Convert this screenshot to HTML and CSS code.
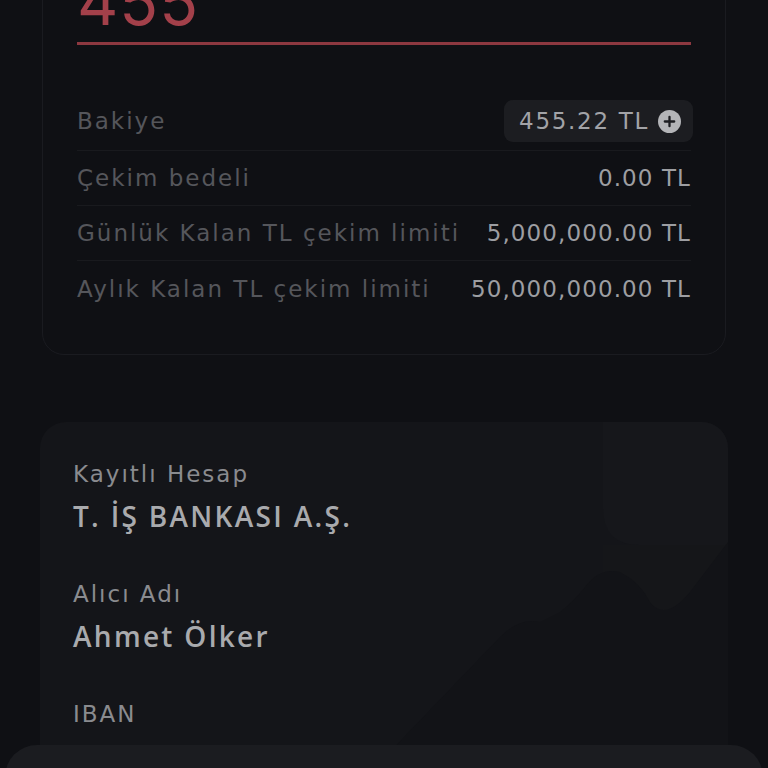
FILE: index.html
```html
<!DOCTYPE html>
<html lang="tr">
<head>
<meta charset="utf-8">
<link rel="stylesheet" href="styles.css">
</head>
<body>
<div class="page">
  <section class="card summary">
    <div class="amount">455</div>
    <div class="rows">
      <div class="row first">
        <span class="label">Bakiye</span>
        <span class="chip"><span class="value">455.22 TL</span>
          <svg class="plus" viewBox="0 0 22 22" width="23" height="23"><circle cx="11" cy="11" r="11" fill="#b4b5b8"/><path d="M11 6.5v9M6.5 11h9" stroke="#1d1e22" stroke-width="2.2" stroke-linecap="round"/></svg>
        </span>
      </div>
      <div class="row">
        <span class="label">Çekim bedeli</span>
        <span class="value">0.00 TL</span>
      </div>
      <div class="row">
        <span class="label">Günlük Kalan TL çekim limiti</span>
        <span class="value">5,000,000.00 TL</span>
      </div>
      <div class="row last">
        <span class="label">Aylık Kalan TL çekim limiti</span>
        <span class="value">50,000,000.00 TL</span>
      </div>
    </div>
  </section>

  <section class="card account">
    <svg class="watermark" viewBox="0 0 688 340" width="688" height="340" preserveAspectRatio="none">
      <path d="M563 0 H688 V123 H600 Q563 123 563 86 Z" fill="#16171b"/>
      <path d="M563 123 H688 V150 Q660 215 610 215 Q575 210 563 160 Z" fill="#151619"/>
      <path d="M340 340 L460 215 Q480 195 500 200 L520 190 Q535 178 545 165 Q560 145 580 150 Q600 160 610 180 Q625 200 650 170 L688 120 V340 Z" fill="#121317"/>
    </svg>
    <div class="field">
      <div class="flabel">Kayıtlı Hesap</div>
      <div class="fvalue">T. İŞ BANKASI A.Ş.</div>
    </div>
    <div class="field">
      <div class="flabel">Alıcı Adı</div>
      <div class="fvalue">Ahmet Ölker</div>
    </div>
    <div class="field">
      <div class="flabel">IBAN</div>
    </div>
  </section>
</div>
<div class="sheet"></div>
</body>
</html>
```
FILE: styles.css
```css
* { box-sizing: border-box; }
html, body { margin: 0; padding: 0; }
body {
  background: #0f1014;
  font-family: "DejaVu Sans", "Noto Sans", sans-serif;
  overflow: hidden;
  height: 768px;
}
.page {
  display: flex;
  flex-direction: column;
  height: 768px;
  overflow: hidden;
}
.card { position: relative; flex-shrink: 0; }
.summary {
  margin: -80px 42px 0;
  border: 1px solid #1a1b20;
  border-radius: 22px;
  padding: 0 34px 38px;
}
.amount {
  font-family: "Inter", sans-serif;
  font-size: 64px;
  line-height: 1;
  color: #a3404a;
  font-weight: 400;
  padding-top: 49px;
  height: 124px;
  border-bottom: 3px solid #8d3840;
  letter-spacing: 1px;
}
.rows { margin-top: 51px; }
.row {
  display: flex;
  justify-content: space-between;
  align-items: center;
  height: 55px;
  border-bottom: 1px solid #191a1e;
  font-size: 23px;
}
.row.first { padding-bottom: 4px; }
.row.last { border-bottom: none; }
.label { color: #55565b; letter-spacing: 2px; }
.value { color: #9d9ea2; letter-spacing: 1.1px; }
.chip {
  display: flex;
  align-items: center;
  gap: 9px;
  background: #1c1d21;
  border-radius: 9px;
  height: 42px;
  padding: 0 12px 0 15px;
  margin-right: -2px;
}
.chip .value { color: #a2a3a7; letter-spacing: 1.7px; }
.account {
  margin: 67px 40px 0;
  background: #141519;
  border-radius: 26px;
  padding: 38px 33px 40px;
  overflow: hidden;
  min-height: 360px;
}
.watermark {
  position: absolute;
  left: 0;
  top: 0;
}
.field { position: relative; margin-bottom: 47px; }
.flabel {
  font-size: 23px;
  line-height: 28px;
  color: #8a8b8f;
  letter-spacing: 2px;
}
.fvalue {
  font-family: "Open Sans", sans-serif;
  font-size: 28px;
  font-weight: 600;
  line-height: 34px;
  color: #a9aaad;
  margin-top: 11px;
  letter-spacing: 2.3px;
}
.sheet {
  position: fixed;
  left: 5px;
  right: 5px;
  top: 745px;
  height: 60px;
  background: #1b1c20;
  border-radius: 32px 32px 0 0;
}
```
